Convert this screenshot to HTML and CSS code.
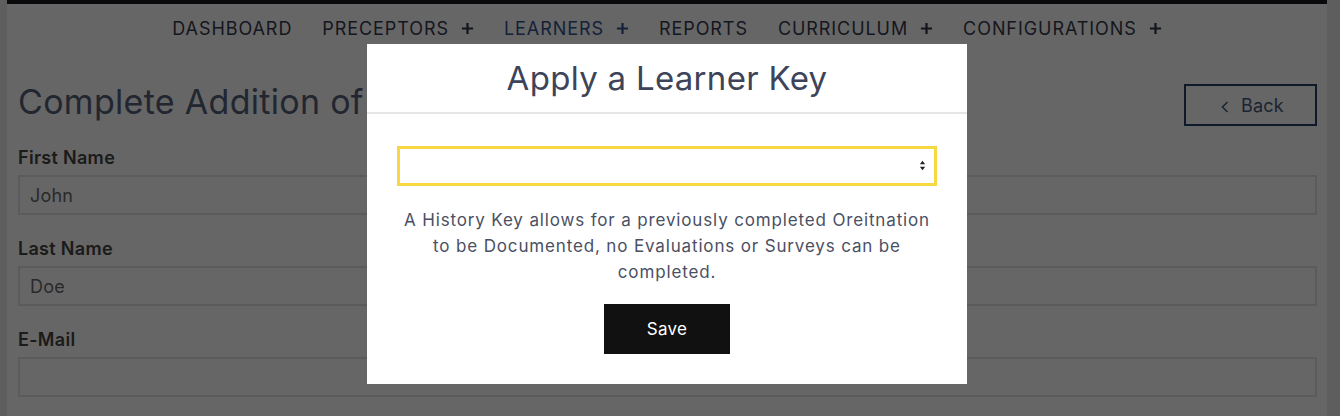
FILE: index.html
```html
<!DOCTYPE html>
<html lang="en">
<head>
    <meta charset="UTF-8">
    <meta name="viewport" content="width=device-width, initial-scale=1.0">
    <title>Complete Addition of Learner</title>
    <link rel="stylesheet" href="styles.css">
</head>
<body>
    <div class="page">
        <!-- Menu principal -->
        <nav class="topnav">
            <a href="#" class="nav-item">DASHBOARD</a>
            <a href="#" class="nav-item">PRECEPTORS <svg class="plus" viewBox="0 0 14 14"><path d="M7 1v12M1 7h12"/></svg></a>
            <a href="#" class="nav-item active">LEARNERS <svg class="plus" viewBox="0 0 14 14"><path d="M7 1v12M1 7h12"/></svg></a>
            <a href="#" class="nav-item">REPORTS</a>
            <a href="#" class="nav-item">CURRICULUM <svg class="plus" viewBox="0 0 14 14"><path d="M7 1v12M1 7h12"/></svg></a>
            <a href="#" class="nav-item">CONFIGURATIONS <svg class="plus" viewBox="0 0 14 14"><path d="M7 1v12M1 7h12"/></svg></a>
        </nav>

        <div class="content">
            <div class="page-head">
                <h1>Complete Addition of Learner</h1>
                <a href="#" class="back-button">
                    <svg class="chevron" viewBox="0 0 8 12"><path d="M6.5 1L1.5 6l5 5"/></svg>
                    Back
                </a>
            </div>

            <form class="learner-form">
                <div class="field">
                    <label for="firstName">First Name</label>
                    <input type="text" id="firstName" value="John">
                </div>
                <div class="field">
                    <label for="lastName">Last Name</label>
                    <input type="text" id="lastName" value="Doe">
                </div>
                <div class="field">
                    <label for="email">E-Mail</label>
                    <input type="text" id="email">
                </div>
            </form>
        </div>
    </div>

    <!-- Fenêtre modale -->
    <div class="overlay">
        <div class="modal">
            <div class="modal-header">
                <h2>Apply a Learner Key</h2>
            </div>
            <div class="modal-body">
                <div class="select-wrap">
                    <select id="learnerKey">
                        <option value=""></option>
                    </select>
                    <svg class="select-arrows" viewBox="0 0 8 12"><path d="M4 0.5L7 4.5H1zM4 11.5L1 7.5h6z"/></svg>
                </div>
                <p class="modal-text">A History Key allows for a previously completed Oreitnation to be Documented, no Evaluations or Surveys can be completed.</p>
                <button type="button" class="save-button">Save</button>
            </div>
        </div>
    </div>
</body>
</html>
```
FILE: styles.css
```css
body {
    margin: 0;
    font-family: Inter, "Open Sans", sans-serif;
    background-color: #ececec;
}

.page {
    margin: 0 13px 0 7px;
    min-height: 416px;
    background-color: #ffffff;
    border-top: 4px solid #1a1a1e;
}

/* Menu */
.topnav {
    height: 49px;
    display: flex;
    justify-content: center;
    align-items: center;
    gap: 30px;
}

.nav-item {
    display: flex;
    align-items: center;
    gap: 12px;
    font-size: 18px;
    letter-spacing: 0.93px;
    color: #363b4e;
    text-decoration: none;
}

.nav-item.active {
    color: #34548e;
}

.plus {
    width: 13px;
    height: 13px;
    fill: none;
    stroke: #30354a;
    stroke-width: 2.4;
}

.active .plus {
    stroke: #34548e;
}

.content {
    padding: 31px 10px 0 11px;
}

.page-head {
    display: flex;
    justify-content: space-between;
    align-items: flex-start;
    margin-bottom: 20px;
}

h1 {
    margin: 0;
    font-size: 34px;
    line-height: 36px;
    font-weight: 400;
    letter-spacing: 0.3px;
    color: #565f78;
}

.back-button {
    width: 133px;
    height: 42px;
    box-sizing: border-box;
    display: flex;
    justify-content: center;
    align-items: center;
    gap: 12px;
    padding-left: 4px;
    border: 2px solid #24406a;
    color: #46587f;
    font-size: 18px;
    letter-spacing: 0.2px;
    text-decoration: none;
}

.chevron {
    width: 8px;
    height: 12px;
    margin-top: 3px;
    fill: none;
    stroke: #46587f;
    stroke-width: 1.6;
}

/* Formulaire */
.field {
    margin-bottom: 22px;
}

.field label {
    display: block;
    margin-bottom: 5px;
    font-size: 18px;
    line-height: 24px;
    font-weight: 600;
    letter-spacing: 0.3px;
    color: #444444;
}

.field input {
    width: 100%;
    height: 40px;
    box-sizing: border-box;
    padding: 0 10px;
    border: 2px solid #e4e4e4;
    font-family: inherit;
    font-size: 18px;
    letter-spacing: 0.2px;
    color: #6a6a6a;
    background-color: #ffffff;
}

/* Modale */
.overlay {
    position: fixed;
    inset: 0;
    display: flex;
    justify-content: center;
    align-items: flex-start;
    padding: 44px 13px 0 7px;
    background-color: rgba(0, 0, 0, 0.6);
}

.modal {
    width: 600px;
    background-color: #ffffff;
}

.modal-header {
    height: 68px;
    border-bottom: 2px solid #e5e5e5;
    display: flex;
    justify-content: center;
    align-items: center;
}

.modal-header h2 {
    margin: 0;
    font-size: 33px;
    font-weight: 400;
    letter-spacing: 0.3px;
    color: #3d4459;
}

.modal-body {
    padding: 32px 30px 30px;
    text-align: center;
}

.select-wrap {
    position: relative;
}

.select-wrap select {
    width: 100%;
    height: 40px;
    display: block;
    border: 3px solid #f6d843;
    border-radius: 0;
    background-color: #ffffff;
    appearance: none;
    -webkit-appearance: none;
    outline: none;
}

.select-arrows {
    position: absolute;
    right: 11px;
    top: 14px;
    width: 7px;
    height: 11px;
    fill: #222222;
}

.modal-text {
    margin: 21px 0 19px;
    font-size: 17px;
    line-height: 26px;
    letter-spacing: 0.85px;
    color: #4a5064;
}

.save-button {
    width: 126px;
    height: 50px;
    border: none;
    background-color: #111111;
    color: #ffffff;
    font-family: inherit;
    font-size: 17px;
    letter-spacing: 0.3px;
    cursor: pointer;
}
```
